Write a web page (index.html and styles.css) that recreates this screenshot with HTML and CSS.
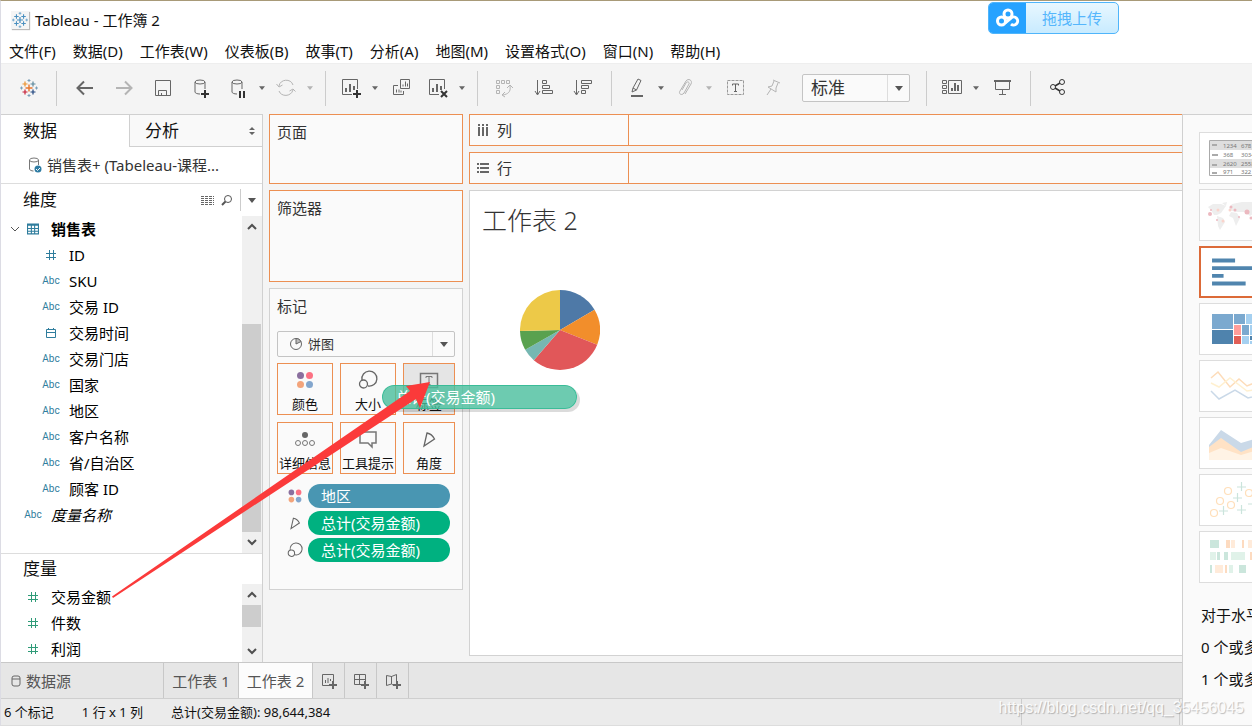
FILE: index.html
```
<!DOCTYPE html>
<html lang="zh-CN">

<head>
    <meta charset="UTF-8">
    <meta name="viewport" content="width=device-width, initial-scale=1.0">
    <title>Tableau - 工作簿 2</title>
    <link rel="stylesheet" href="styles.css">
</head>

<body>
    <!-- shared icons -->
    <svg class="sprite" aria-hidden="true">
        <symbol id="caret" viewBox="0 0 8 5"><path d="M0 0h8L4 5z" fill="currentColor"/></symbol>
        <symbol id="hash" viewBox="0 0 12 12"><path d="M4.500 1v10M8.500 1v10M1 4.500h10M1 8.500h10" fill="none" stroke="currentColor"/></symbol>
        <symbol id="up" viewBox="0 0 12 12"><path d="M2 8l4-4 4 4" fill="none" stroke="#505050" stroke-width="2"/></symbol>
        <symbol id="down" viewBox="0 0 12 12"><path d="M2 4l4 4 4-4" fill="none" stroke="#505050" stroke-width="2"/></symbol>
        <symbol id="dots" viewBox="0 0 20 20">
            <circle cx="5.500" cy="5.500" r="3.500" fill="#8a6f9e"/><circle cx="14.500" cy="5.500" r="3.500" fill="#fc7183"/>
            <circle cx="5.500" cy="14.500" r="3.500" fill="#f3a47b"/><circle cx="14.500" cy="14.500" r="3.500" fill="#83a6cd"/>
        </symbol>
        <symbol id="size" viewBox="0 0 20 20"><g fill="none" stroke="#666" stroke-width="1.300"><path d="M4 10a7.500 7.500 0 1 1 6 6"/><circle cx="5.500" cy="14" r="4"/></g></symbol>
        <symbol id="angle" viewBox="0 0 20 20"><path d="M8 4L5 17l10.500-7C14 7 11 4.500 8 4z" fill="none" stroke="#666" stroke-width="1.300"/></symbol>
        <symbol id="logo" viewBox="0 0 18 18">
            <path d="M9 5.500v7M5.500 9h7" stroke="var(--c1)" stroke-width="1.400"/>
            <path d="M5 2.500v5M2.500 5h5" stroke="var(--c2)" stroke-width="1.200"/>
            <path d="M13 2.500v5M10.500 5h5" stroke="var(--c3)" stroke-width="1.200"/>
            <path d="M5 10.500v5M2.500 13h5" stroke="var(--c4)" stroke-width="1.200"/>
            <path d="M13 10.500v5M10.500 13h5" stroke="var(--c5)" stroke-width="1.200"/>
            <path d="M9 0v3M7.500 1.500h3M9 15v3M7.500 16.500h3M1.500 7.500v3M0 9h3M16.500 7.500v3M15 9h3" stroke="var(--c6)"/>
        </symbol>
    </svg>

    <header class="title-bar">
        <svg class="app-icon"><use href="#logo"/></svg>
        <h1>Tableau - 工作簿 2</h1>
        <button class="upload">
            <span class="upload-icon">
                <svg width="26" height="22" viewBox="0 0 26 22" fill="none" stroke="#fff" stroke-width="3"><circle cx="13" cy="7" r="4"/><circle cx="6.500" cy="14" r="4"/><path d="M10 16l6-5a4 4 0 1 1 0 6"/></svg>
            </span>
            <span class="upload-text">拖拽上传</span>
        </button>
    </header>

    <nav class="menu">
        <a href="#">文件(F)</a>
        <a href="#">数据(D)</a>
        <a href="#">工作表(W)</a>
        <a href="#">仪表板(B)</a>
        <a href="#">故事(T)</a>
        <a href="#">分析(A)</a>
        <a href="#">地图(M)</a>
        <a href="#">设置格式(O)</a>
        <a href="#">窗口(N)</a>
        <a href="#">帮助(H)</a>
    </nav>

    <div class="toolbar">
        <button class="tool" aria-label="起始页"><svg class="start-icon"><use href="#logo"/></svg></button>
        <span class="sep"></span>
        <button class="tool" aria-label="撤消"><svg viewBox="0 0 22 22"><path d="M19 11H4M10 4.500L3.500 11l6.500 6.500" stroke-width="2"/></svg></button>
        <button class="tool off" aria-label="重做"><svg viewBox="0 0 22 22"><path d="M3 11h15M12 4.500l6.500 6.500-6.500 6.500" stroke-width="2"/></svg></button>
        <button class="tool" aria-label="保存"><svg viewBox="0 0 22 22"><path d="M3.500 3.500h15v15h-15zM6.500 18v-4.500h8V18M9.500 18v-2"/></svg></button>
        <button class="tool" aria-label="新建数据源"><svg viewBox="0 0 22 22"><ellipse cx="9" cy="5" rx="5" ry="2"/><path d="M4 5v10c0 1 2 2 5 2M14 5v7"/><path d="M14 13v8M10 17h8" stroke="#333" stroke-width="2"/></svg></button>
        <button class="tool split" aria-label="暂停自动更新"><svg viewBox="0 0 22 22"><ellipse cx="10" cy="5" rx="5" ry="2"/><path d="M5 5v10c0 1 2 2 5 2M15 5v7"/><path d="M13 14v7M17 14v7" stroke="#333" stroke-width="2"/></svg></button>
        <button class="more" aria-label="更多"><svg><use href="#caret"/></svg></button>
        <button class="tool split off" aria-label="运行更新"><svg viewBox="0 0 22 22"><path d="M4 9c1-7 12-8 14-1M18 13c-2 7-12 7-14 1M1.500 7L4 10l3.500-2M20.500 14.500L18 12l-3.500 2"/></svg></button>
        <button class="more off" aria-label="更多"><svg><use href="#caret"/></svg></button>
        <span class="sep"></span>
        <button class="tool split" aria-label="新建工作表"><svg viewBox="0 0 22 22"><path d="M12 17.500H2.500v-15h15V12"/><path d="M6 15v-4M10 15V7M14 13V9" stroke-width="2"/><path d="M17 13v8M13 17h8" stroke="#333" stroke-width="2"/></svg></button>
        <button class="more" aria-label="更多"><svg><use href="#caret"/></svg></button>
        <button class="tool" aria-label="复制"><svg viewBox="0 0 22 22"><path d="M9.500 2.500h9v9h-9zM12 9.500v-2M14.500 9.500v-5M16.500 9.500v-3M7 8.500H2.500v9h10V14M5.500 15.500v-3M8 15.500v-3M10 15.500v-2"/></svg></button>
        <button class="tool split" aria-label="清除工作表"><svg viewBox="0 0 22 22"><path d="M12 17.500H2.500v-15h15V12"/><path d="M6 15v-4M10 15V7M14 13V9" stroke-width="2"/><path d="M14 14l6 6M20 14l-6 6" stroke="#333" stroke-width="2"/></svg></button>
        <button class="more" aria-label="更多"><svg><use href="#caret"/></svg></button>
        <span class="sep"></span>
        <button class="tool off" aria-label="交换行和列"><svg viewBox="0 0 22 22"><path d="M1.500 3.500h3v3h-3zM6.500 3.500h3v3h-3zM11.500 3.500h3v3h-3zM1.500 8.500h3v3h-3zM1.500 13.500h3v3h-3zM15 9c1 6-2 8-7 9M12 11l3-3 3 3M10 15l-3 3 3 2"/></svg></button>
        <button class="tool" aria-label="升序"><svg viewBox="0 0 22 22"><path d="M3.500 3v14M1 14l2.500 4L6 14M8.500 3.500h4v3h-4zM8.500 8.500h7v3h-7zM8.500 13.500h10v3h-10z"/></svg></button>
        <button class="tool" aria-label="降序"><svg viewBox="0 0 22 22"><path d="M3.500 3v14M1 14l2.500 4L6 14M8.500 3.500h10v3h-10zM8.500 8.500h7v3h-7zM8.500 13.500h4v3h-4z"/></svg></button>
        <span class="sep"></span>
        <button class="tool split" aria-label="突出显示"><svg viewBox="0 0 22 22"><path d="M7 11l5-9 3 1.500-4.500 9.500L6 15zM7 11l3.500 2"/><path d="M5 19h12" stroke-width="2"/></svg></button>
        <button class="more" aria-label="更多"><svg><use href="#caret"/></svg></button>
        <button class="tool split off" aria-label="分组"><svg viewBox="0 0 22 22"><path d="M8 13l4-7c1-2 4-1 3 1l-5 9c-2 3-6 1-4-2l6-10c2-3 7-1 5 3l-6 10"/></svg></button>
        <button class="more off" aria-label="更多"><svg><use href="#caret"/></svg></button>
        <button class="tool" aria-label="显示标记标签"><svg viewBox="0 0 22 22"><path d="M2.500 3.500h16v14h-16z" stroke="#999" stroke-dasharray="3 1"/><path d="M7.500 8.500V7h6v1.500M10.500 7v7M9 14.500h3"/></svg></button>
        <button class="tool off" aria-label="固定轴"><svg viewBox="0 0 22 22"><path d="M9 3l7 3M10 4L8 9l-4 1 8 5v-4l2-5M7 12l-4 6"/></svg></button>
        <div class="select-box fit-box">
            <select aria-label="适应"><option>标准</option><option>适应宽度</option><option>整个视图</option></select>
            <span class="select-arrow"><svg><use href="#caret"/></svg></span>
        </div>
        <span class="sep"></span>
        <button class="tool split" aria-label="显示卡"><svg viewBox="0 0 22 22"><path d="M1.500 3.500h4v3h-4zM1.500 8.500h4v3h-4zM1.500 13.500h4v3h-4zM7.500 3.500h13v13h-13z"/><path d="M11 14v-3M14 14V6M17 14V8" stroke-width="2"/></svg></button>
        <button class="more" aria-label="更多"><svg><use href="#caret"/></svg></button>
        <button class="tool" aria-label="演示模式"><svg viewBox="0 0 22 22"><path d="M3.500 4v8.500h14V4M10.500 13v4M7 17.500h7"/><path d="M2 4h17" stroke-width="2"/></svg></button>
        <span class="sep"></span>
        <button class="tool" aria-label="共享"><svg viewBox="0 0 22 22" class="dark"><circle cx="5" cy="10" r="2.500"/><circle cx="14" cy="5" r="2.500"/><circle cx="14" cy="15" r="2.500"/><path d="M7 9l5-3M7 11l5 3" stroke-width="1.500"/></svg></button>
    </div>

    <div class="app">
        <div class="left">
            <main class="workspace">
                <aside class="data-pane">
                    <div class="pane-tabs">
                        <button class="pane-tab active">数据</button>
                        <button class="pane-tab">分析
                            <svg width="8" height="10" viewBox="0 0 8 10" fill="#666"><path d="M1 4h6L4 1zM1 6h6L4 9z"/></svg>
                        </button>
                    </div>
                    <div class="source">
                        <svg width="14" height="16" viewBox="0 0 14 16" fill="none" stroke="#777"><ellipse cx="6" cy="3" rx="4.500" ry="2"/><path d="M1.500 3v9c0 1 2 2 4 2M10.500 3v5"/><circle cx="10" cy="12" r="3.500" fill="#2f7ca3" stroke="none"/><path d="M8 12l1.500 1.500L12 11" stroke="#fff"/></svg>
                        销售表+ (Tabeleau-课程...
                    </div>

                    <section class="fields dimensions">
                        <div class="fields-head">
                            <h2>维度</h2>
                            <svg width="13" height="10" viewBox="0 0 13 10" stroke="#666"><path d="M0 1.500h13M0 3.500h13M0 5.500h13M0 7.500h13M0 9.500h13" stroke-dasharray="3 1"/></svg>
                            <svg width="12" height="12" viewBox="0 0 12 12" fill="none" stroke="#555"><circle cx="7" cy="5" r="3.500"/><path d="M4.500 7.500L1 11" stroke-width="2"/></svg>
                            <span class="head-menu"><svg><use href="#caret"/></svg></span>
                        </div>
                        <div class="fields-body">
                            <ul class="field-list">
                                <li class="table-row"><svg class="twisty" viewBox="0 0 8 8"><path d="M0 2l4 4 4-4" fill="none" stroke="#555"/></svg><span class="type"><svg width="11" height="10" viewBox="0 0 11 10" fill="none" stroke="currentColor"><path d="M.5.500h10v9H.5zM0 1.500h11M0 4.500h11M0 7h11M4 1v9M7 1v9"/></svg></span>销售表</li>
                                <li class="child"><span class="type"><svg><use href="#hash"/></svg></span>ID</li>
                                <li class="child"><span class="type">Abc</span>SKU</li>
                                <li class="child"><span class="type">Abc</span>交易 ID</li>
                                <li class="child"><span class="type"><svg viewBox="0 0 12 12" fill="none" stroke="currentColor"><path d="M1.500 2.500h9v8h-9zM1 5.500h10M3.500 1v2M8.500 1v2"/></svg></span>交易时间</li>
                                <li class="child"><span class="type">Abc</span>交易门店</li>
                                <li class="child"><span class="type">Abc</span>国家</li>
                                <li class="child"><span class="type">Abc</span>地区</li>
                                <li class="child"><span class="type">Abc</span>客户名称</li>
                                <li class="child"><span class="type">Abc</span>省/自治区</li>
                                <li class="child"><span class="type">Abc</span>顾客 ID</li>
                                <li class="generated"><span class="type">Abc</span>度量名称</li>
                            </ul>
                            <div class="scrollbar">
                                <svg><use href="#up"/></svg>
                                <span class="track dim-track"><span class="thumb"></span></span>
                                <svg><use href="#down"/></svg>
                            </div>
                        </div>
                    </section>

                    <section class="fields measures">
                        <div class="fields-head">
                            <h2>度量</h2>
                        </div>
                        <div class="fields-body">
                            <ul class="field-list">
                                <li><span class="type"><svg><use href="#hash"/></svg></span>交易金额</li>
                                <li><span class="type"><svg><use href="#hash"/></svg></span>件数</li>
                                <li><span class="type"><svg><use href="#hash"/></svg></span>利润</li>
                            </ul>
                            <div class="scrollbar">
                                <svg><use href="#up"/></svg>
                                <span class="track mea-track"><span class="thumb"></span></span>
                                <svg><use href="#down"/></svg>
                            </div>
                        </div>
                    </section>
                </aside>

                <div class="cards">
                    <section class="card drop pages"><h3>页面</h3></section>
                    <section class="card drop filters"><h3>筛选器</h3></section>
                    <section class="card marks">
                        <h3>标记</h3>
                        <div class="select-box mark-box">
                            <svg class="pie-icon" viewBox="0 0 14 14" fill="none" stroke="#666"><circle cx="7" cy="7" r="5.500"/><path d="M7 1.500V7l5-2.500C11 2.500 9 1.500 7 1.500z" fill="#bbb"/></svg>
                            <select aria-label="标记类型"><option>饼图</option><option>条形图</option><option>线</option></select>
                            <span class="select-arrow"><svg><use href="#caret"/></svg></span>
                        </div>
                        <div class="mark-grid">
                            <button><svg><use href="#dots"/></svg>颜色</button>
                            <button><svg><use href="#size"/></svg>大小</button>
                            <button class="hover"><svg viewBox="0 0 20 20" fill="none" stroke="#777"><path d="M1.500 3.500h17v14h-17z" stroke-width="1.500"/><path d="M7 8V6.500h6V8M10 6.500v8M8.500 14.500h3"/></svg>标签</button>
                            <button><svg viewBox="0 0 20 20" fill="none" stroke="#777"><circle cx="10" cy="6" r="3" fill="#666" stroke="none"/><circle cx="3" cy="14" r="2.500"/><circle cx="10" cy="14" r="2.500"/><circle cx="17" cy="14" r="2.500"/></svg>详细信息</button>
                            <button><svg viewBox="0 0 20 20" fill="none" stroke="#777" stroke-width="1.500"><path d="M2 3h16v11h-4v4l-4-4H2z"/></svg>工具提示</button>
                            <button><svg><use href="#angle"/></svg>角度</button>
                        </div>
                        <ul class="pills">
                            <li><svg><use href="#dots"/></svg><span class="pill blue">地区</span></li>
                            <li><svg><use href="#angle"/></svg><span class="pill">总计(交易金额)</span></li>
                            <li><svg><use href="#size"/></svg><span class="pill">总计(交易金额)</span></li>
                        </ul>
                    </section>
                </div>

                <div class="view">
                    <div class="shelf">
                        <span class="shelf-name"><svg viewBox="0 0 12 12"><path d="M2 0v12M6 0v12M10 0v12" stroke="#666" stroke-width="2" stroke-dasharray="2 1 9"/></svg>列</span>
                    </div>
                    <div class="shelf">
                        <span class="shelf-name"><svg viewBox="0 0 12 12"><path d="M0 2h12M0 6h12M0 10h12" stroke="#666" stroke-width="2" stroke-dasharray="2 1 9"/></svg>行</span>
                    </div>
                    <div class="sheet">
                        <h2>工作表 2</h2>
                        <svg class="pie" viewBox="-40 -40 80 80">
                            <path d="M0 0V-40A40 40 0 0 1 34.500 -20.200z" fill="#4e79a7"/>
                            <path d="M0 0L34.500-20.200A40 40 0 0 1 37.200 14.700z" fill="#f28e2b"/>
                            <path d="M0 0L37.200 14.700A40 40 0 0 1-26.200 30.200z" fill="#e15759"/>
                            <path d="M0 0L-26.200 30.200A40 40 0 0 1-34.800 19.800z" fill="#76b7b2"/>
                            <path d="M0 0L-34.800 19.800A40 40 0 0 1-40 1z" fill="#59a14f"/>
                            <path d="M0 0L-40 1A40 40 0 0 1 0-40z" fill="#edc948"/>
                        </svg>
                    </div>
                </div>

                <!-- pill being dragged onto the label card -->
                <div class="drag-pill">总计(交易金额)</div>
                <svg class="arrow" width="320" height="218" viewBox="0 0 320 218"><path d="M0 214.500L298 9l-4-5L318 0l-10 26-4-9L1 216z" fill="#fb3a3a"/></svg>
            </main>

            <div class="sheet-tabs">
                <button class="tab source-tab"><svg width="10" height="12" viewBox="0 0 10 12" fill="none" stroke="#666"><rect x="1" y="1" width="8" height="10" rx="2"/><path d="M1 4h8"/></svg>数据源</button>
                <button class="tab">工作表 1</button>
                <button class="tab current">工作表 2</button>
                <button class="tab add" aria-label="新建工作表"><svg viewBox="0 0 18 18"><path d="M9 13.500H2.500v-11h11V9M5.500 11V8M8 11V6M10.500 9V7"/><path d="M13 9v8M9 13h8" stroke-width="2"/></svg></button>
                <button class="tab add" aria-label="新建仪表板"><svg viewBox="0 0 18 18"><path d="M9 12.500H2.500v-10h11V9M2 7.500h12M7.500 2v11"/><path d="M13 9v8M9 13h8" stroke-width="2"/></svg></button>
                <button class="tab add" aria-label="新建故事"><svg viewBox="0 0 18 18"><path d="M9 13L7.500 12l-5 1.500v-10L7.500 4.500l5-2V9M7.500 4v8"/><path d="M13 9v8M9 13h8" stroke-width="2"/></svg></button>
            </div>

            <footer class="status">
                <span>6 个标记</span>
                <span>1 行 x 1 列</span>
                <span>总计(交易金额): 98,644,384</span>
                <span class="status-user"></span>
            </footer>
        </div>

        <aside class="show-me">
            <button><svg viewBox="0 0 72 50"><path d="M9 8h63v34H9z" fill="#fff"/><path d="M9 8h63v9H9zM9 26h63v9H9z" fill="#dedede"/><path d="M72 7.500H9.500v35H72" fill="none" stroke="#aaa"/><path d="M12 12h5M12 22h6M12 32h5M12 40h5" stroke="#aaa" stroke-width="2"/><g class="tiny"><text x="23" y="15">1234</text><text x="41" y="15">678</text><text x="23" y="24">368</text><text x="41" y="24">3034</text><text x="23" y="33">2620</text><text x="41" y="33">2558</text><text x="23" y="41">971</text><text x="41" y="41">322</text></g></svg></button>
            <button><svg viewBox="0 0 72 50"><path d="M8 17l5-3 8 0 5 2-5 7-4 2-3 0-3-5zM17 26l6 2 2 4-5 8-2-4zM29 18l3-4 10-2 12 0 8 2-4 6-8 6-5-4-7 0-6-1zM31 22l6 1 3 5-4 8-3-8-4-2zM22 13l5-1-1 4zM54 29l6 2-2 4-5-1z" fill="#eee"/><g fill="#ecb9c0"><circle cx="10" cy="24" r="2"/><circle cx="11" cy="20" r="1"/><circle cx="31" cy="17" r="1.500"/><circle cx="35" cy="20" r="1.500"/><circle cx="17" cy="30" r="1"/><circle cx="47" cy="22" r="2.500"/><circle cx="51" cy="28" r="1.500"/><circle cx="39" cy="27" r="1"/></g><g fill="#fad4cc"><circle cx="18" cy="20" r="1.500"/><circle cx="23" cy="31" r="1.500"/><circle cx="30" cy="20" r="1.500"/></g></svg></button>
            <button class="picked"><svg viewBox="0 0 72 50"><path d="M10 13h24M10 21h50M10 29h12M10 37h35" stroke="#5085ae" stroke-width="4"/></svg></button>
            <button><svg viewBox="0 0 72 50"><path d="M12 10h21v15H12zM34 10h11v10H34zM42 21h7v10h-7z" fill="#7ba9cf"/><path d="M12 26h21v14H12zM50 32h8v4h-8z" fill="#4f83ad"/><path d="M46 10h12v10H46zM50 21h8v10h-8zM42 32h7v8h-7zM50 37h8v3h-8z" fill="#a5d0f0"/><path d="M34 21h7v10h-7z" fill="#ff9d9a"/><path d="M34 32h7v8h-7z" fill="#e15f57"/></svg></button>
            <button><svg viewBox="0 0 72 50" fill="none" stroke-width="1.500"><path d="M11 17l7-6 12 15 9-8 8 7 12-5" stroke="#fddcb9"/><path d="M11 22l8 4 11-9 17 13 12-2" stroke="#fff0d0"/><path d="M11 30l8 8 16-9 13 8 12-3" stroke="#cad9e8"/></svg></button>
            <button><svg viewBox="0 0 72 50"><path d="M9 27l12-15 20 13 20-6v12L41 35 21 22 9 30z" fill="#cad9e8"/><path d="M9 29l12-9 20 14 20-8v15H9z" fill="#ffe2c5"/><path d="M9 35l12-5 20 7 20-6v11H9z" fill="#fff3e5"/></svg></button>
            <button><svg viewBox="0 0 72 50" fill="none" stroke-width="1.200"><g stroke="#ffdfba"><circle cx="14" cy="38" r="3.500"/><circle cx="20" cy="26" r="3.500"/><circle cx="28" cy="16" r="3.500"/><circle cx="31" cy="30" r="3.500"/><circle cx="49" cy="18" r="3.500"/></g><path d="M19 36h9M23.500 31v9M33 23h9M37.500 18v9M37 12h9M41.500 7v9M37 35h9M41.500 30v9M48 29h8" stroke="#cbe4dc"/></svg></button>
            <button><svg viewBox="0 0 72 50"><path d="M10 8h9v8h-9zM17 20h3v8h-3zM24 20h4v8h-4zM10 33h2v8h-2zM39 33h7v8h-7z" fill="#cbe6dc"/><path d="M10 20h6v8h-6zM31 20h14v8H31zM29 33h4v8h-4z" fill="#e0f2e9"/><path d="M26 8h4v8h-4zM42 8h2v8h-2zM50 20h3v8h-3zM25 33h2v8h-2z" fill="#fddbc0"/><path d="M31 8h4v8h-4zM48 8h6v8h-6zM15 33h8v8h-8z" fill="#ffebda"/></svg></button>
            <p>对于水平条</p>
            <p>0 个或多个</p>
            <p>1 个或多个</p>
        </aside>
    </div>
    <div class="watermark">https://blog.csdn.net/qq_35456045</div>
</body>

</html>
```
FILE: styles.css
```
* {
    box-sizing: border-box;
}

body {
    margin: 0;
    height: 100vh;
    display: flex;
    flex-direction: column;
    position: relative;
    overflow: hidden;
    font-family: "Noto Sans", "Noto Sans CJK SC", sans-serif;
    font-size: 15px;
    line-height: 20px;
    color: #111;
    background: #f4f4f4;
    border-top: 1px solid #a89a78;
    border-left: 1px solid #dcdce4;
    border-bottom: 1px solid #ddd;
}

h1, h2, h3, p, ul {
    margin: 0;
    padding: 0;
    font-weight: normal;
    font-size: inherit;
}

ul {
    list-style: none;
}

button {
    font: inherit;
    color: inherit;
    padding: 0;
    border: none;
    background: none;
}

svg {
    flex: none;
    display: block;
}

.sprite {
    position: absolute;
    width: 0;
    height: 0;
}

/* title and menu */
.title-bar {
    height: 37px;
    display: flex;
    align-items: center;
    padding-left: 10px;
    background: #fff;
}

.app-icon {
    --c1: #4a90c0;
    --c2: #4a90c0;
    --c3: #4a90c0;
    --c4: #4a90c0;
    --c5: #4a90c0;
    --c6: #6aa5cc;
    width: 18px;
    height: 18px;
    padding: 1px;
    margin-right: 6px;
    background: #f5f5f5;
    box-shadow: 1px 1px 1px #bbb;
}

.upload {
    position: absolute;
    top: 1px;
    right: 133px;
    width: 131px;
    height: 32px;
    display: flex;
    border: 1px solid #4fb5fb;
    border-radius: 5px;
    overflow: hidden;
    background: linear-gradient(#e8f7ff, #c8ebff);
}

.upload-icon {
    width: 37px;
    height: 100%;
    display: flex;
    align-items: center;
    justify-content: center;
    background: #26a2ff;
}

.upload-text {
    flex: 1;
    line-height: 30px;
    color: #55b6fc;
}

.menu {
    height: 25px;
    display: flex;
    gap: 17px;
    padding: 3px 8px 0;
    background: #fff;
}

.menu a {
    color: #111;
    text-decoration: none;
}

/* toolbar */
.toolbar {
    height: 51px;
    flex: none;
    display: flex;
    align-items: center;
    padding-left: 8px;
    padding-bottom: 2px;
    border-top: 1px solid #eee;
}

.tool {
    width: 39px;
    height: 34px;
    display: flex;
    align-items: center;
    justify-content: center;
    color: #666;
}

.tool svg {
    width: 22px;
    height: 22px;
    fill: none;
    stroke: currentColor;
}

.tool .dark {
    stroke: #333;
}

.tool .start-icon {
    --c1: #e8762d;
    --c2: #eb912c;
    --c3: #59879b;
    --c4: #c72037;
    --c5: #1f447e;
    --c6: #7a9fb8;
    width: 18px;
    height: 18px;
}

.tool.split {
    width: 33px;
}

.more {
    width: 15px;
    color: #666;
}

.more svg {
    width: 6px;
    height: 4px;
    margin: auto;
}

.off {
    color: #b4b4b4;
}

.sep {
    width: 1px;
    height: 35px;
    margin: 0 8px;
    background: #ccc;
}

.select-box {
    display: flex;
    align-items: center;
    position: relative;
    background: #fafafa;
    border: 1px solid #c4c4c4;
    border-radius: 2px;
}

.select-box select {
    flex: 1;
    min-width: 0;
    height: 100%;
    padding: 0;
    border: none;
    appearance: none;
    background: none;
    font: inherit;
    color: #333;
}

.select-arrow {
    width: 22px;
    height: 100%;
    display: flex;
    align-items: center;
    justify-content: center;
    border-left: 1px solid #ddd;
    color: #555;
    pointer-events: none;
}

.select-arrow svg {
    width: 8px;
    height: 5px;
}

.fit-box {
    width: 108px;
    height: 28px;
    margin: 0 8px;
    padding-left: 8px;
    font-size: 17px;
}

/* main area */
.app {
    flex: 1;
    min-height: 0;
    display: flex;
}

.left {
    flex: 1;
    min-width: 0;
    display: flex;
    flex-direction: column;
}

.workspace {
    flex: 1;
    min-height: 0;
    display: flex;
    gap: 6px;
    position: relative;
}

.data-pane {
    width: 262px;
    display: flex;
    flex-direction: column;
    background: #fff;
    border-top: 1px solid #d0d0d0;
    border-right: 1px solid #d0d0d0;
}

.pane-tabs {
    display: flex;
    height: 32px;
    font-size: 17px;
}

.pane-tab {
    flex: 1;
    display: flex;
    align-items: center;
    justify-content: space-between;
    padding: 0 6px 0 15px;
    border-left: 1px solid #d0d0d0;
    border-bottom: 1px solid #d0d0d0;
    background: #f9f9f9;
}

.pane-tab.active {
    flex: none;
    width: 128px;
    padding-left: 22px;
    border: none;
    background: #fff;
}

.source {
    height: 37px;
    display: flex;
    align-items: center;
    gap: 5px;
    padding-left: 27px;
    color: #333;
    border-bottom: 1px solid #ddd;
    white-space: nowrap;
}

.fields {
    display: flex;
    flex-direction: column;
}

.dimensions {
    flex: 1;
    min-height: 0;
}

.measures {
    border-top: 1px solid #ddd;
}

.fields-head {
    height: 32px;
    display: flex;
    align-items: center;
    gap: 7px;
    padding-left: 22px;
}

.measures .fields-head {
    height: 30px;
}

.fields-head h2 {
    flex: 1;
    font-size: 17px;
}

.head-menu {
    width: 22px;
    height: 22px;
    display: flex;
    align-items: center;
    justify-content: center;
    border-left: 1px solid #ccc;
    color: #555;
}

.head-menu svg {
    width: 8px;
    height: 5px;
}

.fields-body {
    flex: 1;
    min-height: 0;
    display: flex;
}

.field-list {
    flex: 1;
    color: #000;
}

.field-list li {
    height: 26px;
    display: flex;
    align-items: center;
    padding-left: 18px;
}

.field-list .child {
    padding-left: 36px;
}

.field-list .table-row {
    padding-left: 10px;
    font-weight: bold;
}

.field-list .generated {
    font-style: italic;
}

.twisty {
    width: 8px;
    height: 8px;
}

.type {
    width: 28px;
    margin-right: 4px;
    display: flex;
    justify-content: center;
    font-family: Roboto, sans-serif;
    font-size: 10px;
    font-style: normal;
    color: #2f7d9d;
}

.type svg {
    width: 12px;
    height: 12px;
}

.measures .type {
    color: #2f9b78;
}

.scrollbar {
    width: 20px;
    display: flex;
    flex-direction: column;
    align-items: center;
    padding: 5px 0;
    background: #f0f0f0;
}

.scrollbar svg {
    width: 12px;
    height: 12px;
}

.track {
    flex: 1;
    width: 100%;
    display: flex;
    flex-direction: column;
    padding: 4px 1px 4px 0;
}

.thumb {
    flex: 1;
    background: #cdcdcd;
}

.dim-track {
    padding-top: 91px;
}

.mea-track {
    padding-bottom: 18px;
}

/* cards */
.cards {
    width: 194px;
    display: flex;
    flex-direction: column;
    gap: 6px;
}

.card {
    padding: 7px;
    background: #fafafa;
    border: 1px solid #d2d2d2;
}

.card h3 {
    color: #333;
}

.drop {
    border-color: #ec8f52;
}

.pages {
    height: 70px;
}

.filters {
    height: 92px;
}

.marks {
    height: 302px;
}

.mark-box {
    height: 26px;
    margin: 15px 0 6px;
    padding-left: 11px;
    font-size: 13px;
}

.pie-icon {
    width: 14px;
    height: 14px;
    margin-right: 5px;
}

.mark-grid {
    display: grid;
    grid-template-columns: 56px 56px 52px;
    gap: 7px;
    font-size: 13px;
}

.mark-grid button {
    height: 52px;
    display: flex;
    flex-direction: column;
    align-items: center;
    justify-content: space-between;
    padding-top: 6px;
    line-height: 20px;
    border: 1px solid #ec8f52;
    white-space: nowrap;
    color: #111;
}

.mark-grid svg {
    width: 20px;
    height: 20px;
}

.mark-grid .hover {
    background: #e5e5e5;
}

.pills {
    display: flex;
    flex-direction: column;
    gap: 3px;
    padding: 10px 5px 0 10px;
}

.pills li {
    display: flex;
    align-items: center;
    gap: 5px;
}

.pills svg {
    width: 16px;
    height: 16px;
}

.pill {
    flex: 1;
    height: 24px;
    padding-left: 13px;
    line-height: 24px;
    border-radius: 12px;
    color: #fff;
    background: #00b180;
}

.pill.blue {
    background: #4996b2;
}

/* view */
.view {
    flex: 1;
    min-width: 0;
    display: flex;
    flex-direction: column;
    gap: 6px;
    padding-bottom: 6px;
}

.shelf {
    height: 32px;
    background: #fafafa;
    border: 1px solid #ec8f52;
    border-right: none;
}

.shelf-name {
    width: 159px;
    height: 30px;
    display: flex;
    align-items: center;
    gap: 8px;
    padding-left: 7px;
    border-right: 1px solid #ec8f52;
    color: #333;
}

.shelf-name svg {
    width: 12px;
    height: 12px;
}

.sheet {
    flex: 1;
    padding: 12px;
    background: #fff;
    border: 1px solid #d2d2d2;
    border-right: none;
}

.sheet h2 {
    font-size: 25px;
    line-height: 34px;
    font-weight: 300;
    color: #333;
}

.pie {
    width: 80px;
    height: 80px;
    margin: 53px 0 0 38px;
}

.drag-pill {
    position: absolute;
    left: 381px;
    top: 271px;
    width: 195px;
    height: 24px;
    padding-left: 13px;
    line-height: 23px;
    border: 1px solid rgba(48, 185, 146, 0.8);
    border-radius: 12px;
    color: #fff;
    background: rgba(72, 190, 156, 0.8);
    box-shadow: 3px 3px 0 rgba(0, 0, 0, 0.14);
}

.arrow {
    position: absolute;
    left: 111px;
    top: 268px;
    pointer-events: none;
}

/* bottom bars */
.sheet-tabs {
    height: 37px;
    display: flex;
    background: #e6e6e6;
    border-top: 1px solid #c8c8c8;
    border-bottom: 1px solid #cfcfcf;
}

.tab {
    width: 75px;
    color: #555;
    border-right: 1px solid #c8c8c8;
}

.tab.source-tab {
    width: 163px;
    display: flex;
    align-items: center;
    gap: 5px;
    padding-left: 10px;
}

.tab.current {
    width: 74px;
    background: #fcfcfc;
}

.tab.add {
    width: 32px;
    display: flex;
    align-items: center;
    justify-content: center;
}

.add svg {
    width: 18px;
    height: 18px;
    fill: none;
    stroke: #666;
}

.status {
    height: 26px;
    display: flex;
    align-items: center;
    gap: 28px;
    padding-left: 3px;
    font-size: 13px;
    background: #ebebeb;
}

.status-user {
    width: 159px;
    height: 100%;
    margin: 0 2px 0 auto;
    border-left: 1px solid #ccc;
    border-right: 1px solid #ccc;
}

/* show me */
.show-me {
    width: 70px;
    padding: 17px 0 0 16px;
    overflow: hidden;
    background: #fafafa;
    border-top: 1px solid #d0d0d0;
    border-left: 1px solid #d0d0d0;
}

.show-me button {
    display: block;
    width: 76px;
    height: 52px;
    margin-bottom: 5px;
    border: 1px solid #ddd;
    background: #fff;
}

.show-me button svg {
    width: 72px;
    height: 50px;
}

.show-me .picked {
    border: 2px solid #dc6a38;
}

.show-me .picked svg {
    height: 48px;
}

.tiny {
    font-size: 6px;
    fill: #777;
}

.show-me p {
    padding-left: 2px;
    margin-bottom: 12px;
    white-space: nowrap;
}

.show-me button + p {
    padding-top: 17px;
}

.watermark {
    position: absolute;
    right: 8px;
    bottom: 7px;
    font-family: "Liberation Sans", sans-serif;
    font-size: 16px;
    color: rgba(255, 255, 255, 0.9);
    text-shadow: 1px 1px 1px rgba(0, 0, 0, 0.25);
    pointer-events: none;
}
```
